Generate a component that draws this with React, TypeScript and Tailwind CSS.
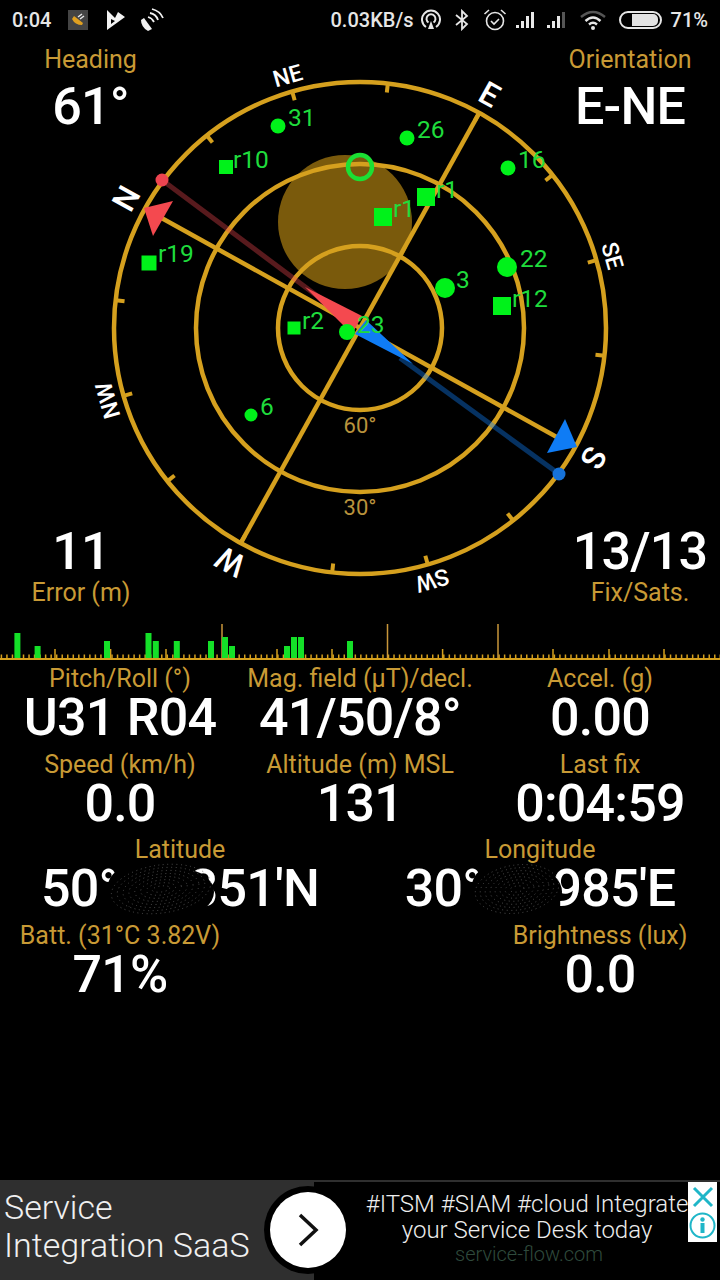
import React from "react";

const GOLD = "#d5a01e";
const LABEL = "h-[28px] text-[25px] leading-[30px] text-[#c89a35] whitespace-nowrap";
const VALUE = "h-[50px] text-[52px] leading-[52px] font-medium text-white whitespace-nowrap tracking-[-0.8px]";
const cx = 360;
const cy = 328;
const deg = Math.PI / 180;

function Stat({ label, value }: { label: string; value: string }) {
  return (
    <div className="flex flex-col items-center">
      <div className={LABEL}>{label}</div>
      <div className={VALUE}>{value}</div>
    </div>
  );
}

function polar(a: number, r: number): [number, number] {
  return [cx + r * Math.sin(a * deg), cy - r * Math.cos(a * deg)];
}

const sats: { x: number; y: number; s: number; sq?: boolean; t: string; tx: number; ty: number }[] = [
  { x: 278, y: 126, s: 7.5, t: "31", tx: 288, ty: 117 },
  { x: 226, y: 167, s: 14, sq: true, t: "r10", tx: 233, ty: 159 },
  { x: 407, y: 138, s: 7.5, t: "26", tx: 417, ty: 129 },
  { x: 508, y: 168, s: 7.5, t: "16", tx: 518, ty: 159 },
  { x: 426, y: 197, s: 18, sq: true, t: "r1", tx: 436, ty: 189 },
  { x: 383, y: 217, s: 18, sq: true, t: "r1", tx: 393, ty: 208 },
  { x: 149, y: 263, s: 15, sq: true, t: "r19", tx: 158, ty: 253 },
  { x: 507, y: 267, s: 10, t: "22", tx: 520, ty: 258 },
  { x: 445, y: 288, s: 10, t: "3", tx: 456, ty: 279 },
  { x: 502, y: 306, s: 18, sq: true, t: "r12", tx: 512, ty: 298 },
  { x: 294, y: 328, s: 13, sq: true, t: "r2", tx: 302, ty: 320 },
  { x: 251, y: 415, s: 6.5, t: "6", tx: 260, ty: 406 },
  { x: 347, y: 332, s: 8, t: "23", tx: 357, ty: 324 },
];

function Compass() {
  const rot = -61;
  const ticks = Array.from({ length: 16 }, (_, i) => rot + i * 22.5);
  const names = [
    ["N", 0, 267, 32],
    ["NE", 45, 262, 23],
    ["E", 90, 267, 32],
    ["SE", 135, 262, 23],
    ["S", 180, 267, 32],
    ["SW", 225, 262, 23],
    ["W", 270, 267, 32],
    ["NW", 315, 262, 23],
  ] as const;
  const e = polar(29, 246);
  const w = polar(209, 246);
  const n = polar(-61, 246);
  const s = polar(119, 246);
  return (
    <svg width="720" height="570" viewBox="0 40 720 570" className="block">
      <circle cx="345" cy="222" r="67" fill="#7a5a0c" />
      <g fill="none" stroke={GOLD} strokeWidth="4.5">
        <circle cx={cx} cy={cy} r="82" />
        <circle cx={cx} cy={cy} r="164" />
        <circle cx={cx} cy={cy} r="246" />
      </g>
      {ticks.map((a, i) => {
        const [x1, y1] = polar(a, 246);
        const [x2, y2] = polar(a, 237);
        return <line key={i} x1={x1} y1={y1} x2={x2} y2={y2} stroke={GOLD} strokeWidth="4" />;
      })}
      <line x1={e[0]} y1={e[1]} x2={w[0]} y2={w[1]} stroke={GOLD} strokeWidth="4.5" />
      <line x1={n[0]} y1={n[1]} x2={s[0]} y2={s[1]} stroke={GOLD} strokeWidth="4.5" />
      <line x1="162" y1="180" x2="320" y2="298" stroke="#f4494f" strokeOpacity="0.36" strokeWidth="5" />
      <line x1="400" y1="358" x2="559" y2="474" stroke="#0f7cf5" strokeOpacity="0.4" strokeWidth="5" />
      <polygon points="305,287 362,316 352,334" fill="#f4494f" />
      <polygon points="366,320 355,334 413,364" fill="#0f7cf5" />
      <polygon points="173,201 144,208 153,236" fill="#f4494f" />
      <polygon points="565,419 577,447 547,453" fill="#0f7cf5" />
      <circle cx="162" cy="180" r="6.5" fill="#ee4450" />
      <circle cx="559" cy="474" r="6.5" fill="#1672d8" />
      {names.map(([t, a, r, fs]) => {
        const [x, y] = polar(rot + a, r);
        return (
          <text
            key={t}
            x={x}
            y={y}
            fill="#ffffff"
            fontSize={fs}
            fontWeight={500}
            textAnchor="middle"
            dominantBaseline="central"
            transform={`rotate(${rot + a} ${x} ${y})`}
          >
            {t}
          </text>
        );
      })}
      <text x="360" y="425" fill="#b8923c" fontSize="22" textAnchor="middle" dominantBaseline="central">60°</text>
      <text x="360" y="507" fill="#b8923c" fontSize="22" textAnchor="middle" dominantBaseline="central">30°</text>
      <circle cx="360" cy="167" r="12" fill="none" stroke="#1be034" strokeWidth="4.5" />
      {sats.map((p, i) =>
        p.sq ? (
          <rect key={i} x={p.x - p.s / 2} y={p.y - p.s / 2} width={p.s} height={p.s} fill="#00f21a" />
        ) : (
          <circle key={i} cx={p.x} cy={p.y} r={p.s} fill="#00f21a" />
        )
      )}
      {sats.map((p, i) => (
        <text key={i} x={p.tx} y={p.ty} fill="#1fdc3c" fontSize="24.5" dominantBaseline="central">
          {p.t}
        </text>
      ))}
    </svg>
  );
}

function Histogram() {
  const minor = Array.from({ length: 131 }, (_, i) => 1.4 + i * 5.53);
  const medium = [55, 110.6, 166, 277, 332, 442.6, 553, 609, 664];
  const tall = [222, 387.5, 498];
  const bars = [
    [17.4, 633], [37.6, 646], [107, 641], [148.5, 633], [155.8, 641], [176.8, 641], [211, 641],
    [225, 637], [232, 646], [287, 646], [294, 637], [301, 637], [350, 641],
  ];
  return (
    <svg width="720" height="54" viewBox="0 610 720 54" className="block">
      {minor.map((x, i) => (
        <line key={i} x1={x} y1="654.5" x2={x} y2="660" stroke="#d5a01e" strokeWidth="1.5" />
      ))}
      {medium.map((x) => (
        <line key={x} x1={x} y1="649" x2={x} y2="660" stroke="#d5a01e" strokeWidth="1.5" />
      ))}
      {tall.map((x) => (
        <line key={x} x1={x} y1="624" x2={x} y2="660" stroke="#c8963a" strokeWidth="1.5" />
      ))}
      {bars.map(([x, y], i) => (
        <rect key={i} x={x - 3} y={y} width="6" height={659 - y} fill="#14e028" />
      ))}
      <rect x="0" y="658" width="720" height="2" fill="#d5a01e" />
    </svg>
  );
}

function Blob({ w }: { w: number }) {
  const rings = Array.from({ length: 8 }, (_, i) => i);
  return (
    <svg width={w} height="54" viewBox={`0 0 ${w} 54`} className="block">
      <ellipse cx={w * 0.3} cy="24" rx={w * 0.3} ry="22" fill="#000000" />
      <ellipse cx={w * 0.7} cy="30" rx={w * 0.3} ry="23" fill="#000000" />
      <ellipse cx={w / 2} cy="27" rx={w * 0.4} ry="26" fill="#000000" />
      {rings.map((i) => (
        <ellipse
          key={i}
          cx={w / 2}
          cy="27"
          rx={w / 2 - 3 - i * (w / 18)}
          ry={24 - i * 3}
          transform={`rotate(-8 ${w / 2} 27)`}
          fill="none"
          stroke="#5a5a5a"
          strokeWidth="0.8"
          strokeDasharray="1 3.5"
        />
      ))}
    </svg>
  );
}

function Signal({ dim }: { dim?: boolean }) {
  return (
    <svg width="20" height="18" viewBox="0 0 20 18">
      <rect x="0" y="14" width="3" height="3" fill="#e8e8e8" />
      <rect x="5" y="10" width="3" height="7" fill="#e8e8e8" />
      <rect x="10" y="5" width="3" height="12" fill="#e8e8e8" />
      <rect x="15" y="1" width="3" height="16" fill={dim ? "#555555" : "#e8e8e8"} />
    </svg>
  );
}

function StatusBar() {
  return (
    <div className="relative flex h-[40px] items-center pl-[12px] pr-[12px] text-[20px] font-medium text-[#e6e6e6]">
      <span className="w-[56px]">0:04</span>
      <svg width="20" height="20" viewBox="0 0 20 20" className="shrink-0">
        <rect width="20" height="20" fill="#444444" />
        <path d="M4 9 Q7 15 14 15 L15 13 L6 6 Z" fill="#e0a020" />
        <path d="M10 7 L14 4 M12 9 L16 6" stroke="#e8e8e8" strokeWidth="1.5" />
      </svg>
      <svg width="20" height="20" viewBox="0 0 20 20" className="ml-[18px] shrink-0">
        <path d="M1 0 L9 8 L12 2 L19 7 L1 20 Z M5 9 L5 14 L9 11 Z" fill="#f2f2f2" fillRule="evenodd" />
      </svg>
      <svg width="24" height="24" viewBox="0 0 24 24" className="ml-[14px] shrink-0">
        <path d="M1 12 Q1 19 8 23 L12 21 L4 10 Z" fill="#f2f2f2" />
        <g fill="none" stroke="#f2f2f2" strokeWidth="1.8">
          <path d="M8 9 Q12 10 14 14" />
          <path d="M10 5 Q16 6 18 12" />
          <path d="M12 1 Q20 3 23 10" />
        </g>
      </svg>
      <span className="ml-auto">0.03KB/s</span>
      <svg width="20" height="22" viewBox="0 0 20 22" className="ml-[7px] shrink-0">
        <g fill="none" stroke="#e6e6e6" strokeWidth="2">
          <path d="M5 18 A9 9 0 1 1 15 18" />
          <path d="M7.5 13.5 A4.5 4.5 0 1 1 12.5 13.5" />
        </g>
        <path d="M10 12 L13 20 L7 20 Z" fill="#e6e6e6" />
      </svg>
      <svg width="14" height="22" viewBox="0 0 14 22" className="ml-[14px] shrink-0">
        <path d="M1 6 L12 15 L7 20 L7 2 L12 7 L1 16" fill="none" stroke="#e6e6e6" strokeWidth="1.8" />
      </svg>
      <svg width="24" height="24" viewBox="0 0 24 24" className="ml-[14px] shrink-0">
        <g fill="none" stroke="#e6e6e6" strokeWidth="1.6">
          <circle cx="12" cy="13" r="8.5" />
          <path d="M8 13 L11 16 L16 11" />
          <path d="M1.5 6 L6 2 M22.5 6 L18 2" />
        </g>
      </svg>
      <div className="ml-[9px] flex shrink-0 gap-[11px]">
        <Signal />
        <Signal dim />
      </div>
      <svg width="26" height="20" viewBox="0 0 26 20" className="ml-[13px] shrink-0">
        <g fill="none" strokeWidth="2.4">
          <path d="M1 7 Q13 -3 25 7" stroke="#555555" />
          <path d="M5.5 11 Q13 4 20.5 11" stroke="#e6e6e6" />
          <path d="M9 14.5 Q13 11 17 14.5" stroke="#e6e6e6" />
        </g>
        <circle cx="13" cy="18" r="2" fill="#e6e6e6" />
      </svg>
      <div className="ml-[13px] flex h-[18px] w-[43px] shrink-0 items-center rounded-[9px] border-2 border-[#e6e6e6] pl-[11px]">
        <div className="h-[12px] w-[26px] rounded-r-[5px] bg-[#e2e2e2]" />
      </div>
      <span className="ml-[9px]">71%</span>
    </div>
  );
}

export default function App() {
  return (
    <div className="flex h-[1280px] w-[720px] flex-col overflow-hidden bg-black font-['Roboto',sans-serif]">
      <StatusBar />
      <div className="relative h-[570px] w-[720px]">
        <Compass />
        <div className="absolute left-0 top-[5px] flex w-[181px] flex-col items-center gap-[8px]">
          <div className={LABEL}>Heading</div>
          <div className={VALUE}>61°</div>
        </div>
        <div className="absolute right-0 top-[5px] flex w-[180px] flex-col items-center gap-[8px]">
          <div className={LABEL}>Orientation</div>
          <div className={VALUE}>E-NE</div>
        </div>
        <div className="absolute left-0 top-[486px] flex w-[162px] flex-col items-center gap-[2px]">
          <div className={VALUE}>11</div>
          <div className={LABEL}>Error (m)</div>
        </div>
        <div className="absolute right-0 top-[486px] flex w-[160px] flex-col items-center gap-[2px]">
          <div className={VALUE}>13/13</div>
          <div className={LABEL}>Fix/Sats.</div>
        </div>
      </div>
      <Histogram />
      <div className="flex flex-col gap-y-[7.5px]">
        <div className="grid grid-cols-3">
          <Stat label="Pitch/Roll (°)" value="U31 R04" />
          <Stat label="Mag. field (µT)/decl." value="41/50/8°" />
          <Stat label="Accel. (g)" value="0.00" />
        </div>
        <div className="grid grid-cols-3">
          <Stat label="Speed (km/h)" value="0.0" />
          <Stat label="Altitude (m) MSL" value="131" />
          <Stat label="Last fix" value="0:04:59" />
        </div>
        <div className="relative grid grid-cols-2">
          <Stat label="Latitude" value="50°00.351'N" />
          <Stat label="Longitude" value="30°00.985'E" />
          <div className="absolute left-[108px] top-[27px]">
            <Blob w={106} />
          </div>
          <div className="absolute left-[472px] top-[27px]">
            <Blob w={90} />
          </div>
        </div>
        <div className="grid grid-cols-3">
          <Stat label="Batt. (31°C 3.82V)" value="71%" />
          <div />
          <Stat label="Brightness (lux)" value="0.0" />
        </div>
      </div>
      <div className="relative mt-auto flex h-[100px] w-[720px]">
        <div className="flex w-[314px] flex-col justify-center bg-[#2f2f2f] pb-[8px] pl-[4px] text-[34px] font-light leading-[38px] text-[#f0f0f0]">
          <div>Service</div>
          <div className="whitespace-nowrap">Integration SaaS</div>
        </div>
        <div className="flex flex-1 flex-col items-center border-t-2 border-[#2f2f2f] bg-black pl-[20px] pt-[9px] font-light text-[#ededed]">
          <div className="whitespace-nowrap text-[24px] leading-[27px]">#ITSM #SIAM #cloud Integrate</div>
          <div className="whitespace-nowrap text-[24px] leading-[25px]">your Service Desk today</div>
          <div className="ml-[4px] whitespace-nowrap text-[20px] leading-[23px] text-[#2f4a3c]">service-flow.com</div>
        </div>
        <div className="absolute left-[264px] top-[6px] flex h-[88px] w-[88px] items-center justify-center rounded-full bg-black">
          <div className="flex h-[76px] w-[76px] items-center justify-center rounded-full bg-white">
            <svg width="22" height="36" viewBox="0 0 22 36">
              <path d="M3 3 L19 18 L3 33" fill="none" stroke="#111111" strokeWidth="3.5" />
            </svg>
          </div>
        </div>
        <div className="absolute left-[688px] top-[2px] flex h-[60px] w-[29px] flex-col items-center justify-center gap-[3px] bg-white">
          <svg width="24" height="24" viewBox="0 0 24 24">
            <path d="M3 3 L21 21 M21 3 L3 21" stroke="#1fb6c8" strokeWidth="3" />
          </svg>
          <svg width="27" height="27" viewBox="0 0 27 27">
            <circle cx="13.5" cy="13.5" r="12" fill="none" stroke="#1fb6c8" strokeWidth="2" />
            <rect x="11.5" y="11" width="4" height="10" fill="#1fb6c8" />
            <circle cx="13.5" cy="7.5" r="2.2" fill="#1fb6c8" />
          </svg>
        </div>
      </div>
    </div>
  );
}
